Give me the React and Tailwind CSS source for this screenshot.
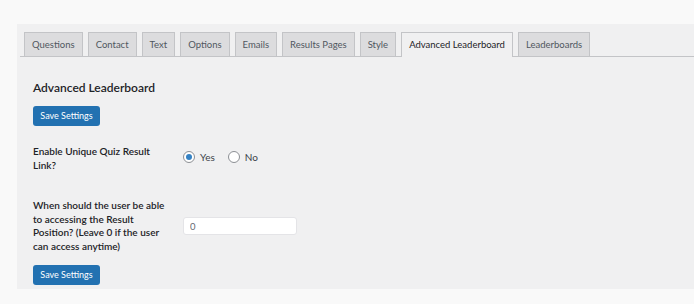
import React from 'react'

const tabs = ['Questions', 'Contact', 'Text', 'Options', 'Emails', 'Results Pages', 'Style', 'Advanced Leaderboard', 'Leaderboards']
const active = 'Advanced Leaderboard'

const SaveButton = () => (
  <div className="flex">
    <button className="h-5 w-[67px] rounded-[3px] bg-[#2271b1] text-[9px] leading-5 text-white">
      Save Settings
    </button>
  </div>
)

const Radio = ({ checked, label }) => (
  <label className="flex items-center gap-[5px] text-[10px] text-[#3c434a]">
    <span className="flex h-3 w-3 items-center justify-center rounded-full border border-[#8c8f94] bg-white">
      {checked && <span className="h-[6px] w-[6px] rounded-full bg-[#3582c4]" />}
    </span>
    {label}
  </label>
)

export default function App() {
  return (
    <div className="min-h-screen bg-[#f9f9f9] pl-[17px] pt-6" style={{ fontFamily: 'Lato, "Noto Sans", sans-serif' }}>
      <div className="h-[265px] bg-[#f0f0f1]">
        <div className="ml-[3px] flex gap-[5px] border-b border-[#c3c4c7] pl-1 pt-2">
          {tabs.map((t) => (
            <div
              key={t}
              className={
                t === active
                  ? '-mb-px h-[25px] border border-b-0 border-[#c3c4c7] bg-[#f0f0f1] px-[7px] text-[9.5px] leading-[23px] text-[#1d2327]'
                  : 'h-6 border border-b-0 border-[#c3c4c7] bg-[#dcdcde] px-[7px] text-[9.5px] leading-[23px] text-[#50575e]'
              }
            >
              {t}
            </div>
          ))}
        </div>

        <div className="pl-4">
          <h2 className="pt-[23px] text-[12px] font-semibold leading-4 text-[#1d2327]">Advanced Leaderboard</h2>
          <div className="mt-[10px]">
            <SaveButton />
          </div>

          <div className="mt-[19px] flex">
            <div className="w-[150px] pr-4 text-[10px] font-semibold leading-[13.5px] text-[#1d2327]">
              Enable Unique Quiz Result Link?
            </div>
            <div className="flex h-6 items-center gap-[13px]">
              <Radio checked label="Yes" />
              <Radio label="No" />
            </div>
          </div>

          <div className="mt-[27px] flex items-center">
            <div className="w-[150px] pr-[14px] text-[10px] font-semibold leading-[13.5px] text-[#1d2327]">
              When should the user be able to accessing the Result Position? (Leave 0 if the user can access anytime)
            </div>
            <input
              readOnly
              value="0"
              className="h-[18px] w-[114px] rounded-[3px] border border-[#e4e4e7] bg-white px-[6px] text-[9.5px] text-[#646970] outline-none"
            />
          </div>

          <div className="mt-[12px]">
            <SaveButton />
          </div>
        </div>
      </div>
    </div>
  )
}
